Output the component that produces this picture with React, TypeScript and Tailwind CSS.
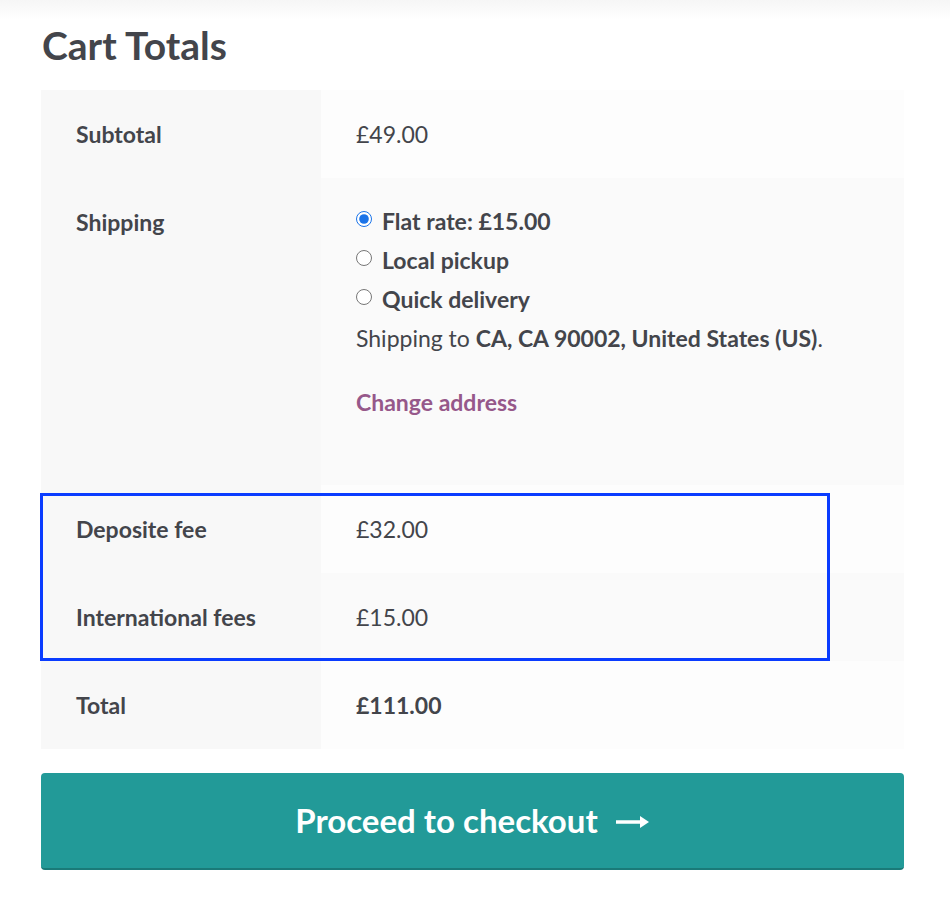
import React from "react";

const font = { fontFamily: "Lato, 'Liberation Sans', sans-serif" };

function Row({ label, children, alt }: { label: string; children: React.ReactNode; alt?: boolean }) {
  return (
    <div className="flex">
      <div className="w-[280px] shrink-0 bg-[#f8f8f8] pl-[35px] py-[28px] text-[23px] leading-[32px] font-bold text-[#43454b]">
        {label}
      </div>
      <div className={`flex-1 pl-[35px] py-[28px] text-[23px] leading-[32px] text-[#43454b] ${alt ? "bg-[#fafafa]" : "bg-[#fdfdfd]"}`}>
        {children}
      </div>
    </div>
  );
}

export default function App() {
  return (
    <div className="w-[950px] h-[916px] bg-white relative" style={font}>
      <div className="h-[20px] bg-gradient-to-b from-[#f6f6f6] to-white" />
      <div className="pl-[41px]">
        <h2 className="text-[39px] leading-[40px] font-bold text-[#43454b] ml-[1px] mt-[5px]">Cart Totals</h2>
        <div className="mt-[25px] w-[863px] relative">
          <Row label="Subtotal">£49.00</Row>
          <Row label="Shipping" alt>
            <div className="flex flex-col">
              <label className="flex items-center gap-[10px] font-bold leading-[39px] -mt-[4px]">
                <input type="radio" name="ship" defaultChecked className="w-[16px] h-[16px] m-0 accent-[#1a73e8] -mt-[5px]" />
                <span>Flat rate: £15.00</span>
              </label>
              <label className="flex items-center gap-[10px] font-bold leading-[39px]">
                <input type="radio" name="ship" className="w-[16px] h-[16px] m-0 -mt-[5px]" />
                <span>Local pickup</span>
              </label>
              <label className="flex items-center gap-[10px] font-bold leading-[39px]">
                <input type="radio" name="ship" className="w-[16px] h-[16px] m-0 -mt-[5px]" />
                <span>Quick delivery</span>
              </label>
              <p className="leading-[39px]">
                Shipping to <strong>CA, CA 90002, United States (US)</strong>.
              </p>
              <a className="mt-[25px] mb-[35px] font-bold text-[#96588a] leading-[39px]">Change address</a>
            </div>
          </Row>
          <Row label="Deposite fee">£32.00</Row>
          <Row label="International fees" alt>£15.00</Row>
          <Row label="Total"><strong>£111.00</strong></Row>
          <div className="absolute left-[-1px] top-[403px] w-[790px] h-[168px] border-[3px] border-[#0a3cff] pointer-events-none" />
        </div>
        <button className="mt-[24px] w-[863px] h-[97px] rounded-[4px] bg-[#229a98] border-b-[2px] border-[#1a7a78] text-white text-[33px] font-bold flex items-center justify-center gap-[18px]">
          <span>Proceed to checkout</span>
          <svg width="34" height="16" viewBox="0 0 34 16" className="mt-[2px]">
            <path d="M0 8 H28" stroke="white" strokeWidth="3.5" />
            <path d="M24 2 L33 8 L24 14 Z" fill="white" />
          </svg>
        </button>
      </div>
    </div>
  );
}
